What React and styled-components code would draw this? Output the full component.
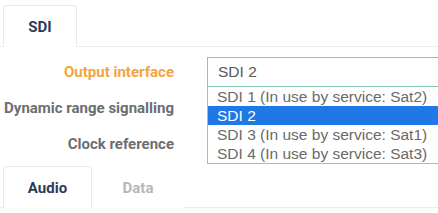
import styled, { createGlobalStyle } from 'styled-components';

const Global = createGlobalStyle`
  html, body {
    margin: 0;
    background: #fff;
    overflow: hidden;
  }
`;

const Page = styled.div`
  width: 438px;
  height: 213px;
  padding-top: 5px;
  box-sizing: border-box;
  overflow: hidden;
  font-family: Roboto, "Liberation Sans", sans-serif;
`;

const TabBar = styled.div`
  display: flex;
  padding-left: 3px;
  border-bottom: 1px solid #ececec;
`;

const Tab = styled.div`
  width: ${p => p.$width}px;
  height: 42px;
  box-sizing: border-box;
  display: flex;
  align-items: center;
  justify-content: center;
  font-size: 15px;
  font-weight: 700;
  color: ${p => (p.$active ? '#2b3c58' : '#b3b7be')};
  background: #fff;
  border: 1px solid ${p => (p.$active ? '#e9e9e9' : 'transparent')};
  border-bottom: none;
  border-radius: 4px 4px 0 0;
  margin-bottom: -1px;
`;

const Form = styled.div`
  display: grid;
  grid-template-columns: 174px 1fr;
  column-gap: 33px;
  grid-auto-rows: 36px;
  margin-top: 7px;
  margin-bottom: 4px;
`;

const Label = styled.div`
  justify-self: end;
  align-self: center;
  font-size: 15px;
  font-weight: 700;
  white-space: nowrap;
  color: ${p => (p.$focus ? '#f2a541' : '#6b6e72')};
`;

const Field = styled.div`
  position: relative;
  align-self: center;
`;

const Select = styled.div`
  height: 30px;
  width: 270px;
  box-sizing: border-box;
  border: 1px solid #86c8b6;
  padding-left: 10px;
  display: flex;
  align-items: center;
  font-family: "Liberation Sans", Arial, sans-serif;
  font-size: 15.5px;
  color: #595959;
`;

const List = styled.div`
  position: absolute;
  top: 30px;
  left: 0;
  width: 270px;
  box-sizing: border-box;
  border: 1px solid #aab7d4;
  border-top: none;
  background: #fff;
  z-index: 2;
`;

const Option = styled.div`
  height: 19px;
  line-height: 19px;
  padding-left: 9px;
  font-family: "Liberation Sans", Arial, sans-serif;
  font-size: 15.5px;
  white-space: nowrap;
  color: ${p => (p.$selected ? '#fff' : '#6a6a6a')};
  background: ${p => (p.$selected ? '#1f78e6' : 'transparent')};
`;

const options = [
  'SDI 1 (In use by service: Sat2)',
  'SDI 2',
  'SDI 3 (In use by service: Sat1)',
  'SDI 4 (In use by service: Sat3)',
];

export default function App() {
  return (
    <Page>
      <Global />
      <TabBar>
        <Tab $active $width={74}>SDI</Tab>
      </TabBar>
      <Form>
        <Label $focus>Output interface</Label>
        <Field>
          <Select>SDI 2</Select>
          <List>
            {options.map(o => (
              <Option key={o} $selected={o === 'SDI 2'}>{o}</Option>
            ))}
          </List>
        </Field>
        <Label>Dynamic range signalling</Label>
        <div />
        <Label>Clock reference</Label>
        <div />
      </Form>
      <TabBar>
        <Tab $active $width={89}>Audio</Tab>
        <Tab $width={92}>Data</Tab>
      </TabBar>
    </Page>
  );
}
